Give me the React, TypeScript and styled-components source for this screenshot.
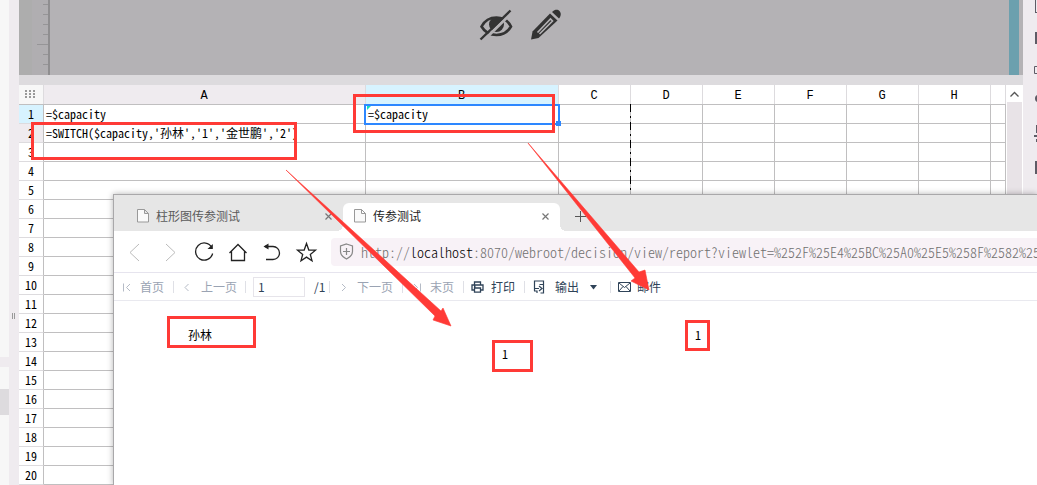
import React from 'react';
import styled, { createGlobalStyle, css } from 'styled-components';

const GlobalStyle = createGlobalStyle`
  *, *::before, *::after { box-sizing: border-box; }
  body { margin: 0; background: #fff; }
  button, input { font: inherit; color: inherit; }
`;

const RED = '#ff3a36';
const BLUE = '#2d87ff';
const sheetFont = css`
  font-family: 'Noto Sans CJK SC', 'Liberation Mono', monospace;
  font-feature-settings: 'hwid';
`;

const Desk = styled.div`
  position: relative;
  display: flex;
  min-height: 100vh;
  overflow: hidden;
  font-family: 'Noto Sans CJK SC', sans-serif;
  font-size: 12px;
`;

/* ---------- designer ---------- */

const SidePanel = styled.aside`
  display: flex;
  flex-direction: column;
  width: 9px;
  background: #f7f7f7;
`;
const PanelBlock = styled.div<{ $h: number; $bg: string }>`
  flex: none;
  height: ${p => p.$h}px;
  background: ${p => p.$bg};
`;
const Splitter = styled.div`
  width: 10px;
  flex: none;
  padding: 313px 0 0 3px;
  background: #efebef;
`;
const Grip = styled.div`
  width: 3px;
  height: 6px;
  border: solid #999;
  border-width: 0 1px;
`;
const Designer = styled.main`
  display: flex;
  flex-direction: column;
  flex: 1;
  min-width: 0;
`;
const Canvas = styled.section`
  display: flex;
  height: 75px;
  background: #b4b2b5;
`;
const Gutter = styled.div`
  width: 13px;
  background: #adadad;
`;
const Ruler = styled.svg`
  flex: none;
  width: 18px;
  height: 75px;
`;
const CanvasTools = styled.div`
  display: flex;
  flex: 1;
  justify-content: center;
  align-items: flex-start;
  gap: 17px;
  padding: 9px 19px 0 0;
`;
const CanvasEdge = styled.div`
  width: 10px;
  margin-right: 4px;
  background: #6ca0ae;
`;
const IconButton = styled.button<{ $w: number; $h: number }>`
  display: flex;
  align-items: center;
  justify-content: center;
  flex: none;
  width: ${p => p.$w}px;
  height: ${p => p.$h}px;
  padding: 0;
  border: 0;
  background: none;
`;
const SplitBar = styled.div`
  height: 10px;
  background: #dddbde;
`;
const SheetArea = styled.div`
  display: flex;
  flex: 1;
`;
const SheetWrap = styled.div`
  position: relative;
  isolation: isolate;
  flex: 1;
  min-width: 0;
`;
const Sheet = styled.table`
  width: 100%;
  table-layout: fixed;
  border-collapse: separate;
  border-spacing: 0;
  ${sheetFont}
  font-size: 12px;
  line-height: 18px;
  color: #000;
`;
const ColHead = styled.th<{ $tone?: string }>`
  height: 20px;
  padding: 3px 2px 0 0;
  border: solid #c0bfc0;
  border-width: 0 0 1px;
  box-shadow: inset -1px 0 #dddbde;
  background: ${p => p.$tone ?? '#fff'};
  font-family: 'Liberation Mono', monospace;
  font-size: 12px;
  line-height: 16px;
  font-weight: 400;
  overflow: hidden;
`;
const RowHead = styled.th<{ $tone?: string }>`
  height: 19px;
  padding: 0;
  border: solid #c0bfc0;
  border-width: 0 1px 1px 0;
  border-bottom-color: #dddbde;
  background: ${p => p.$tone ?? '#fff'};
  font-weight: 400;
`;
const Cell = styled.td`
  position: relative;
  height: 19px;
  padding: 0 0 0 2px;
  border: solid #c0bfc0;
  border-width: 0 1px 1px 0;
  white-space: nowrap;
`;
const Selection = styled.div`
  position: absolute;
  z-index: 1;
  inset: -1px -2px -2px -2px;
  border: 2px solid ${BLUE};
  &::before {
    content: '';
    position: absolute;
    left: 1px;
    top: 0;
    border: solid transparent;
    border-width: 4px 4px 0 0;
    border-top-color: #13e0c0;
  }
  &::after {
    content: '';
    position: absolute;
    right: -3px;
    bottom: -3px;
    width: 5px;
    height: 5px;
    background: ${BLUE};
  }
`;
const PageBreak = styled.div`
  position: absolute;
  left: 611px;
  top: 19px;
  bottom: 0;
  width: 1px;
  background: repeating-linear-gradient(#000 0 8px, #c0bfc0 8px 12px, #000 12px 14px, #c0bfc0 14px 18px);
`;
const ScrollBar = styled.div`
  width: 17px;
  flex: none;
  padding: 1px 1px 0;
  background: #fff;
  display: flex;
  flex-direction: column;
`;
const Track = styled.div`
  flex: 1;
  background: #e8e3e7;
`;
const Rail = styled.aside`
  width: 14px;
  flex: none;
  background: #efebef;
`;

/* ---------- browser window ---------- */

const Browser = styled.section`
  position: absolute;
  left: 113px;
  right: 0;
  top: 194px;
  bottom: 0;
  display: flex;
  flex-direction: column;
  border: solid #a9a8aa;
  border-width: 1px 0 0 1px;
  background: #fff;
  box-shadow: 0 0 6px rgba(0, 0, 0, 0.3);
`;
const TabStrip = styled.div`
  display: flex;
  align-items: flex-end;
  height: 36px;
  flex: none;
  background: #e6e6e6;
`;
const Tab = styled.div<{ $active?: boolean }>`
  position: relative;
  display: flex;
  align-items: center;
  gap: 7px;
  width: ${p => (p.$active ? 217 : 229)}px;
  height: 28px;
  padding: 0 10px 2px ${p => (p.$active ? 11 : 23)}px;
  border-radius: 6px 6px 0 0;
  background: ${p => (p.$active ? '#fff' : 'transparent')};
  color: ${p => (p.$active ? '#222' : '#5a5a5a')};
  ${p =>
    p.$active &&
    css`
      &::before,
      &::after {
        content: '';
        position: absolute;
        bottom: 0;
        width: 6px;
        height: 6px;
      }
      &::before {
        left: -6px;
        background: radial-gradient(circle at 0 0, transparent 6px, #fff 6px);
      }
      &::after {
        right: -6px;
        background: radial-gradient(circle at 100% 0, transparent 6px, #fff 6px);
      }
    `}
`;
const TabTitle = styled.button`
  flex: 1;
  padding: 0;
  border: 0;
  background: none;
  text-align: left;
  line-height: 18px;
`;
const NewTab = styled(IconButton)`
  margin: 0 0 9px 14px;
`;
const NavBar = styled.nav`
  display: flex;
  align-items: center;
  height: 42px;
  flex: none;
  padding-left: 10px;
  border-bottom: 1px solid #e6e4ee;
`;
const NavButtons = styled.div`
  display: flex;
  gap: 10px;
  padding-right: 13px;
`;
const Address = styled.div`
  display: flex;
  align-items: center;
  gap: 7px;
  flex: 1;
  min-width: 0;
  height: 28px;
  padding-left: 8px;
  border-radius: 4px 0 0 4px;
  background: #f8f2f7;
`;
const Url = styled.div`
  flex: 1;
  overflow: hidden;
  white-space: nowrap;
  ${sheetFont}
  font-size: 14px;
  font-weight: 300;
  line-height: 20px;
  color: #707070;
`;
const Host = styled.span`
  color: #000;
`;
const Toolbar = styled.div`
  display: flex;
  align-items: center;
  height: 28px;
  flex: none;
  padding-left: 8px;
  border-bottom: 1px solid #e9e9ef;
  color: #2f4358;
`;
const ToolButton = styled.button<{ $w: number; $gap?: number }>`
  display: flex;
  align-items: center;
  flex: none;
  width: ${p => p.$w}px;
  gap: ${p => p.$gap ?? 8}px;
  padding: 0;
  border: 0;
  background: none;
  line-height: 18px;
  white-space: nowrap;
  &:disabled { color: #9aa3b3; }
`;
const Divider = styled.span`
  flex: none;
  width: 1px;
  height: 12px;
  margin-right: 7px;
  background: #dfe0e6;
`;
const PageInput = styled.input`
  width: 52px;
  height: 20px;
  padding: 0 4px;
  border: 1px solid #e6e4ea;
  background: #fff;
  outline: 0;
`;
const PageTotal = styled.span`
  width: 24px;
  padding-left: 9px;
  line-height: 18px;
`;
const Report = styled.table`
  margin: 24px 0 0 74px;
  table-layout: fixed;
  width: 580px;
  border-spacing: 0;
  ${sheetFont}
  line-height: 19px;
  td { height: 19px; padding: 0; }
`;

/* ---------- annotations ---------- */

const Mark = styled.div<{ $x: number; $y: number; $w: number; $h: number }>`
  position: absolute;
  left: ${p => p.$x}px;
  top: ${p => p.$y}px;
  width: ${p => p.$w}px;
  height: ${p => p.$h}px;
  border: 3px solid ${RED};
  pointer-events: none;
`;
const Arrows = styled.svg`
  position: absolute;
  left: 0;
  top: 0;
  pointer-events: none;
`;

const FileIcon = () => (
  <svg width="12" height="14" viewBox="0 0 12 14" fill="#fafafa" stroke="#999">
    <path d="M.5.5h7l4 4v8.500H.5zM7.500.5v4h4" />
  </svg>
);
const CloseIcon = () => (
  <svg width="9" height="9" viewBox="0 0 9 9" stroke="#777" strokeWidth="1.200" fill="none">
    <path d="M1.500 1.500l6 6M7.500 1.500l-6 6" />
  </svg>
);

const cols = ['A', 'B', 'C', 'D', 'E', 'F', 'G', 'H', ''];
const rows = Array.from({ length: 20 }, (_, i) => i + 1);
const formulas: Record<string, string> = {
  '1A': '=$capacity',
  '1B': '=$capacity',
  '2A': "=SWITCH($capacity,'孙林','1','金世鹏','2')",
};

function Spreadsheet() {
  return (
    <Sheet>
      <colgroup>
        <col width="25" />
        <col width="322" />
        <col width="193" />
        {cols.slice(2, 8).map(c => <col key={c} width="72" />)}
        <col />
      </colgroup>
      <thead>
        <tr>
          <ColHead $tone="#f7f7f7" aria-label="全选">
            <svg width="11" height="9" viewBox="0 0 11 9" fill="#999">
              {[0, 4, 8].map(x => [0, 3, 6].map(y => <rect key={`${x}-${y}`} x={x} y={y} width="2" height="2" />))}
            </svg>
          </ColHead>
          {cols.map(c => (
            <ColHead key={c} $tone={c === 'A' ? '#efebef' : c === 'B' ? '#d7f3ff' : undefined}>{c}</ColHead>
          ))}
        </tr>
      </thead>
      <tbody>
        {rows.map(r => (
          <tr key={r}>
            <RowHead $tone={r === 1 ? '#d7f3ff' : r === 2 ? '#efebef' : undefined}>{r}</RowHead>
            {cols.map(c => (
              <Cell key={c}>
                {formulas[r + c]}
                {r === 1 && c === 'B' && <Selection />}
              </Cell>
            ))}
          </tr>
        ))}
      </tbody>
    </Sheet>
  );
}

function BrowserWindow() {
  return (
    <Browser>
      <TabStrip>
        <Tab>
          <FileIcon />
          <TabTitle>柱形图传参测试</TabTitle>
          <IconButton $w={9} $h={9} aria-label="关闭"><CloseIcon /></IconButton>
        </Tab>
        <Tab $active>
          <FileIcon />
          <TabTitle>传参测试</TabTitle>
          <IconButton $w={9} $h={9} aria-label="关闭"><CloseIcon /></IconButton>
        </Tab>
        <NewTab $w={12} $h={12} aria-label="新标签页">
          <svg width="12" height="12" viewBox="0 0 12 12" stroke="#555"><path d="M6.500 1v11M1 6.500h11" /></svg>
        </NewTab>
      </TabStrip>
      <NavBar>
        <NavButtons>
          <IconButton $w={24} $h={24} aria-label="后退">
            <svg width="24" height="24" viewBox="0 0 24 24" fill="none" stroke="#bbb"><path d="M15 4l-9 8.500 9 8.500" /></svg>
          </IconButton>
          <IconButton $w={24} $h={24} aria-label="前进">
            <svg width="24" height="24" viewBox="0 0 24 24" fill="none" stroke="#bbb"><path d="M8 4l9 8.500L8 21" /></svg>
          </IconButton>
          <IconButton $w={24} $h={24} aria-label="刷新">
            <svg width="24" height="24" viewBox="0 0 24 24" fill="none" stroke="#222" strokeWidth="1.300">
              <path d="M19.800 7.500A8.600 8.600 0 1 0 20.600 13.500" />
              <path d="M20.800 4v5h-5.300z" fill="#222" stroke="none" />
            </svg>
          </IconButton>
          <IconButton $w={24} $h={24} aria-label="主页">
            <svg width="24" height="24" viewBox="0 0 24 24" fill="none" stroke="#222" strokeWidth="1.300">
              <path d="M3.500 13L12 4.500 20.500 13M5.500 11.500v9h13v-9" />
            </svg>
          </IconButton>
          <IconButton $w={24} $h={24} aria-label="撤销">
            <svg width="24" height="24" viewBox="0 0 24 24" fill="none" stroke="#222" strokeWidth="1.300">
              <path d="M5 6.500h8a6.500 6.500 0 0 1 0 13H6" />
              <path d="M3.500 6.500l5-3v6z" fill="#222" stroke="none" />
            </svg>
          </IconButton>
          <IconButton $w={24} $h={24} aria-label="收藏">
            <svg width="24" height="24" viewBox="0 0 24 24" fill="none" stroke="#222" strokeWidth="1.300">
              <path d="M12.500 3.500l2.300 6.500 6.700.2-5.200 4.200 1.700 6.300-5.500-3.600-5.500 3.600 1.700-6.300-5.200-4.200 6.700-.2z" />
            </svg>
          </IconButton>
        </NavButtons>
        <Address role="textbox" aria-label="地址">
          <svg width="15" height="17" viewBox="0 0 15 17" fill="none" stroke="#888" strokeWidth="1.200">
            <path d="M7.500 1l6 2v5.500c0 4-3 6-6 7.500-3-1.500-6-3.500-6-7.500V3zM7.500 5v7M4 8.500h7" />
          </svg>
          <Url>
            http://<Host>localhost</Host>:8070/webroot/decision/view/report?viewlet=%252F%25E4%25BC%25A0%25E5%258F%2582%25
          </Url>
        </Address>
      </NavBar>
      <Toolbar>
        <ToolButton $w={51} disabled>
          <svg width="10" height="10" viewBox="0 0 10 10" fill="none" stroke="#b5bbc6"><path d="M1.500 1.500v8M8 2L4.500 5.500 8 9" /></svg>
          首页
        </ToolButton>
        <Divider />
        <ToolButton $w={64} disabled>
          <svg width="12" height="10" viewBox="0 0 12 10" fill="none" stroke="#b5bbc6"><path d="M7.500 2L4 5.500 7.500 9" /></svg>
          上一页
        </ToolButton>
        <Divider />
        <PageInput aria-label="页码" defaultValue="1" />
        <PageTotal>/1</PageTotal>
        <Divider />
        <ToolButton $w={65} disabled>
          <svg width="12" height="10" viewBox="0 0 12 10" fill="none" stroke="#b5bbc6"><path d="M5 2l3.500 3.500L5 9" /></svg>
          下一页
        </ToolButton>
        <Divider />
        <ToolButton $w={53} disabled>
          <svg width="12" height="10" viewBox="0 0 12 10" fill="none" stroke="#b5bbc6"><path d="M4 2l3.500 3.500L4 9M10.500 1.500v8" /></svg>
          末页
        </ToolButton>
        <Divider />
        <ToolButton $w={53} $gap={7}>
          <svg width="13" height="12" viewBox="0 0 13 12" fill="none" stroke="#2f4358" strokeWidth="1.300">
            <path d="M3.500 4V1h6v3M3.500 9H1V4h11v5H9.500M3.500 7h6v4.200h-6zM3 5.500h1.500" />
          </svg>
          打印
        </ToolButton>
        <Divider />
        <ToolButton $w={78} $gap={9}>
          <svg width="14" height="14" viewBox="0 0 14 14" fill="none" stroke="#2f4358" strokeWidth="1.200">
            <path d="M2.500 11V1h9v12H8.500M11.500 4.500H7.500M2 8.500h5M7 6l3 2.500L7 11M2 11h3v2" />
          </svg>
          输出
          <svg width="10" height="6" viewBox="0 0 10 6" fill="#2f4358"><path d="M2 1h7L5.500 5.500z" /></svg>
        </ToolButton>
        <Divider />
        <ToolButton $w={60} $gap={6}>
          <svg width="13" height="11" viewBox="0 0 13 11" fill="none" stroke="#2f4358">
            <path d="M.5 1.500h12v9H.5zM1 2l5.500 4.500L12 2M1 10l4-4.500M12 10L8 5.500" />
          </svg>
          邮件
        </ToolButton>
      </Toolbar>
      <Report>
        <colgroup><col width="314" /><col width="193" /><col /></colgroup>
        <tbody>
          <tr><td>孙林</td><td /><td>1</td></tr>
          <tr><td /><td>1</td><td /></tr>
        </tbody>
      </Report>
    </Browser>
  );
}

export default function App() {
  return (
    <Desk>
      <GlobalStyle />
      <SidePanel>
        <PanelBlock $h={357} $bg="#f7f7f7" />
        <PanelBlock $h={10} $bg="#efebef" />
        <PanelBlock $h={22} $bg="#f7f7f7" />
        <PanelBlock $h={26} $bg="#dddbde" />
      </SidePanel>
      <Splitter><Grip /></Splitter>
      <Designer>
        <Canvas>
          <Gutter />
          <Ruler viewBox="0 0 18 75">
            <path d="M0 0h16v75H0z" fill="#b0aeb1" />
            <path d="M11 4.500h5M11 14.500h5M11 24.500h5M11 34.500h5M5 44.500h11M11 54.500h5M11 64.500h5" stroke="#969597" />
            <path d="M17 0v75" stroke="#8f8e90" strokeWidth="2" />
          </Ruler>
          <CanvasTools>
            <IconButton $w={34} $h={32} aria-label="隐藏">
              <svg width="34" height="32" viewBox="0 0 34 32" fill="none" stroke="#333" strokeWidth="2.600">
                <path d="M2.500 17.500C6 11 11 8.500 17.500 8.500S29 11.500 32 17.500c-3.500 6-8.500 8.500-14.500 8.500S6 23.500 2.500 17.500z" />
                <circle cx="17.500" cy="15.500" r="7.500" fill="#333" stroke="none" />
                <path d="M3.500 32.500L33.500 3" stroke="#b4b2b5" strokeWidth="3" />
                <path d="M1.500 30.500L31.500 1.500" strokeWidth="2.400" />
              </svg>
            </IconButton>
            <IconButton $w={32} $h={32} aria-label="编辑">
              <svg width="32" height="32" viewBox="0 0 32 32" fill="#333">
                <path d="M1 30.500l1.500-8L20 4.500l7.500 7L8.500 29z" />
                <path d="M7.500 23.500l13-13.500 2 2L9.500 25" fill="none" stroke="#b4b2b5" strokeWidth="1.600" />
                <path d="M22 3C25 0 28 .5 29.500 2s2 4.500-.5 7.500z" />
              </svg>
            </IconButton>
          </CanvasTools>
          <CanvasEdge />
        </Canvas>
        <SplitBar />
        <SheetArea>
          <SheetWrap>
            <Spreadsheet />
            <PageBreak />
          </SheetWrap>
          <ScrollBar>
            <IconButton $w={15} $h={16} aria-label="向上滚动">
              <svg width="11" height="7" viewBox="0 0 11 7" fill="none" stroke="#555" strokeWidth="1.300"><path d="M1.500 5.500l4-4 4 4" /></svg>
            </IconButton>
            <Track />
          </ScrollBar>
        </SheetArea>
      </Designer>
      <Rail>
        <svg width="14" height="180" viewBox="0 0 14 180" fill="#5e5c66">
          <path d="M12 0h1v12h1v1h-2zM12 32h2v12h-2zM14 95v7c-1.500-1-2-2-2-3.500s.5-2.500 2-3.500zM13 125h1v8h-1zM11 135h3v2h-3zM13 139h1v3h-1zM12 161h2v13h-2z" />
          <path d="M14 66.500h-2.500v7H14" fill="none" stroke="#5e5c66" />
        </svg>
      </Rail>
      <BrowserWindow />
      <Mark $x={31} $y={122} $w={266} $h={38} />
      <Mark $x={353} $y={94} $w={202} $h={39} />
      <Mark $x={167} $y={316} $w={89} $h={32} />
      <Mark $x={492} $y={340} $w={41} $h={32} />
      <Mark $x={685} $y={320} $w={25} $h={31} />
      <Arrows width="660" height="340" viewBox="0 0 660 340" fill={RED}>
        <path d="M286 170L441 311l2-3 8 18-18-6 2-4z" stroke={RED} strokeWidth=".6" />
        <path d="M528 143L639 272l6-2 4 20-18-9 4-3z" stroke={RED} strokeWidth=".6" />
      </Arrows>
    </Desk>
  );
}
